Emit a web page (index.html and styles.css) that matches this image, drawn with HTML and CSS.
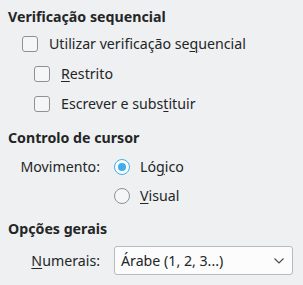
FILE: index.html
```html
<!DOCTYPE html>
<html lang="pt">
<head>
    <meta charset="UTF-8">
    <title>Opções de idioma</title>
    <link rel="stylesheet" href="styles.css">
</head>
<body>
    <div class="panel">
        <h2 class="group-title">Verificação sequencial</h2>
        <label class="check-row">
            <span class="checkbox"></span>
            <span>Utilizar verificação se<u>q</u>uencial</span>
        </label>
        <label class="check-row sub">
            <span class="checkbox"></span>
            <span><u>R</u>estrito</span>
        </label>
        <label class="check-row sub">
            <span class="checkbox"></span>
            <span>Escrever e subs<u>t</u>ituir</span>
        </label>

        <h2 class="group-title second">Controlo de cursor</h2>
        <div class="form-grid">
            <span class="field-label">Movimento:</span>
            <label class="radio-row">
                <span class="radio checked"></span>
                <span>Ló<u>g</u>ico</span>
            </label>
            <span></span>
            <label class="radio-row">
                <span class="radio"></span>
                <span><u>V</u>isual</span>
            </label>
        </div>

        <h2 class="group-title third">Opções gerais</h2>
        <div class="form-grid">
            <span class="field-label numerals"><u>N</u>umerais:</span>
            <div class="combo">
                <span>Árabe (1, 2, 3...)</span>
                <svg class="chevron" width="10" height="6" viewBox="0 0 10 6">
                    <path d="M0.5 0.5 L5 5 L9.5 0.5" fill="none" stroke="#4d4d4d" stroke-width="1.2"/>
                </svg>
            </div>
        </div>
    </div>
</body>
</html>
```

FILE: styles.css
```css
body, html {
    margin: 0;
    background-color: #eff0f1;
    font-family: "Noto Sans", sans-serif;
    font-size: 14.2px;
    color: #232627;
}

.panel {
    padding: 8px 10px 0 8px;
}

.group-title {
    font-size: 14.2px;
    font-weight: bold;
    line-height: 18px;
    margin: 0 0 3px 0;
}

.group-title.second {
    margin-top: 10px;
    margin-bottom: 5px;
}

.group-title.third {
    margin-top: 10px;
    margin-bottom: 8px;
}

u {
    text-decoration-thickness: 1px;
    text-underline-offset: 2px;
}

.check-row {
    display: flex;
    align-items: center;
    gap: 11px;
    height: 30px;
    line-height: 18px;
    padding-left: 14px;
}

.check-row.sub {
    padding-left: 26px;
}

.checkbox {
    width: 14px;
    height: 14px;
    border: 1px solid #8e9193;
    border-radius: 3px;
    background-color: #f5f6f6;
}

.form-grid {
    display: grid;
    grid-template-columns: 92px 1fr;
    column-gap: 14px;
    align-items: center;
}

.field-label {
    text-align: right;
    line-height: 18px;
}

.radio-row {
    display: flex;
    align-items: center;
    gap: 10px;
    height: 29px;
    line-height: 18px;
}

.radio {
    box-sizing: border-box;
    width: 16px;
    height: 16px;
    border: 1px solid #8e9193;
    border-radius: 50%;
    background-color: #f5f6f6;
    position: relative;
}

.radio.checked {
    border-color: #3daee9;
    background-color: #fcfcfc;
}

.radio.checked::after {
    content: "";
    position: absolute;
    left: 3px;
    top: 3px;
    width: 8px;
    height: 8px;
    border-radius: 50%;
    background-color: #3daee9;
}

.combo {
    display: flex;
    align-items: center;
    justify-content: space-between;
    box-sizing: border-box;
    height: 29px;
    padding: 0 8px 0 6px;
    border: 1px solid #b8babc;
    border-radius: 3px;
    background-color: #fcfcfc;
    line-height: 18px;
}

.chevron {
    display: block;
}
```
